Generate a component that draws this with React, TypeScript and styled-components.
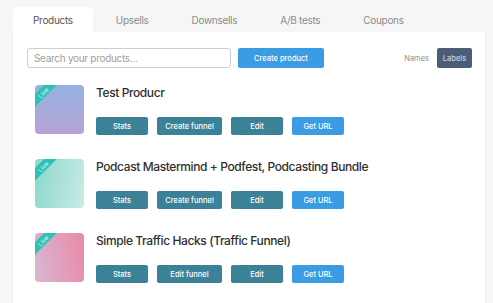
import React from "react";
import styled, { createGlobalStyle } from "styled-components";

const Global = createGlobalStyle`
  html, body { margin: 0; padding: 0; background: #f6f6f6; }
  body { font-family: Inter, "Liberation Sans", Arial, sans-serif; -webkit-font-smoothing: antialiased; }
  * { box-sizing: border-box; }
`;

const Page = styled.div`
  width: 493px;
  height: 303px;
  overflow: hidden;
  padding: 7px 7px 0 12px;
  display: flex;
  flex-direction: column;
`;

const Tabs = styled.div`
  display: flex;
  gap: 3px;
  padding-left: 1px;
  height: 25px;
`;

const Tab = styled.div<{ $active?: boolean }>`
  padding: 0 20px;
  display: flex;
  align-items: center;
  font-size: 10px;
  letter-spacing: -0.3px;
  color: ${(p) => (p.$active ? "#555" : "#8a8a8a")};
  background: ${(p) => (p.$active ? "#fff" : "transparent")};
  border-radius: 3px 3px 0 0;
`;

const Panel = styled.div`
  flex: 1;
  background: #fff;
  border-left: 1px solid #eee;
  border-right: 1px solid #ececec;
  padding: 16px 13px 0 14px;
`;

const Toolbar = styled.div`
  display: flex;
  align-items: center;
  height: 20px;
`;

const Search = styled.input`
  width: 204px;
  height: 20px;
  border: 1px solid #cfcfcf;
  border-radius: 3px;
  padding: 0 6px;
  font-family: inherit;
  font-size: 10px;
  letter-spacing: -0.3px;
  color: #333;
  outline: none;
  &::placeholder { color: #a0a0a0; }
`;

const Button = styled.button<{ $variant: "blue" | "teal" | "slate" }>`
  border: none;
  border-radius: 2px;
  font-family: inherit;
  font-size: 7.5px;
  font-weight: 500;
  color: ${(p) => (p.$variant === "slate" ? "#c9d1dc" : "#fff")};
  background: ${(p) =>
    p.$variant === "blue" ? "#3a9ce2" : p.$variant === "teal" ? "#3b8198" : "#4b5d78"};
  padding: 0;
  cursor: pointer;
`;

const CreateButton = styled(Button)`
  width: 86px;
  height: 20px;
  margin-left: 7px;
`;

const ViewToggle = styled.div`
  margin-left: auto;
  display: flex;
  align-items: center;
  gap: 8px;
`;

const NamesLabel = styled.span`
  font-size: 7.5px;
  color: #8c8c8c;
`;

const LabelsButton = styled(Button)`
  width: 35px;
  height: 20px;
`;

const List = styled.div`
  display: flex;
  flex-direction: column;
  gap: 24px;
  padding: 17px 0 0 8px;
`;

const Row = styled.div`
  display: flex;
  gap: 12px;
`;

const Thumb = styled.div<{ $from: string; $to: string; $angle: number }>`
  position: relative;
  width: 49px;
  height: 49px;
  border-radius: 4px;
  overflow: hidden;
  flex-shrink: 0;
  background: linear-gradient(${(p) => p.$angle}deg, ${(p) => p.$from}, ${(p) => p.$to});
`;

const Ribbon = styled.div`
  position: absolute;
  left: -18px;
  top: 3px;
  width: 52px;
  height: 9px;
  background: #2cc2b7;
  transform: rotate(-45deg);
  display: flex;
  align-items: center;
  justify-content: center;
  font-size: 6px;
  color: #e6fbf8;
  letter-spacing: 0.2px;
`;

const Info = styled.div`
  display: flex;
  flex-direction: column;
  justify-content: space-between;
  height: 50px;
`;

const Title = styled.div`
  font-size: 12px;
  letter-spacing: -0.4px;
  font-weight: 500;
  color: #2f2f2f;
  line-height: 15px;
`;

const Actions = styled.div`
  display: flex;
  gap: 9px;
`;

const ActionButton = styled(Button)<{ $w: number }>`
  width: ${(p) => p.$w}px;
  height: 18px;
`;

type Product = {
  name: string;
  funnel: string;
  from: string;
  to: string;
  angle: number;
};

const products: Product[] = [
  { name: "Test Producr", funnel: "Create funnel", from: "#93b3e2", to: "#b7a3d4", angle: 180 },
  { name: "Podcast Mastermind + Podfest, Podcasting Bundle", funnel: "Create funnel", from: "#8dd7cb", to: "#c7ebe5", angle: 100 },
  { name: "Simple Traffic Hacks (Traffic Funnel)", funnel: "Edit funnel", from: "#d8b7d3", to: "#e98aa6", angle: 80 },
];

export default function App() {
  return (
    <>
      <Global />
      <Page>
        <Tabs>
          <Tab $active>Products</Tab>
          <Tab>Upsells</Tab>
          <Tab>Downsells</Tab>
          <Tab>A/B tests</Tab>
          <Tab>Coupons</Tab>
        </Tabs>
        <Panel>
          <Toolbar>
            <Search placeholder="Search your products..." />
            <CreateButton $variant="blue">Create product</CreateButton>
            <ViewToggle>
              <NamesLabel>Names</NamesLabel>
              <LabelsButton $variant="slate">Labels</LabelsButton>
            </ViewToggle>
          </Toolbar>
          <List>
            {products.map((p) => (
              <Row key={p.name}>
                <Thumb $from={p.from} $to={p.to} $angle={p.angle}>
                  <Ribbon>Live</Ribbon>
                </Thumb>
                <Info>
                  <Title>{p.name}</Title>
                  <Actions>
                    <ActionButton $variant="teal" $w={52}>Stats</ActionButton>
                    <ActionButton $variant="teal" $w={65}>{p.funnel}</ActionButton>
                    <ActionButton $variant="teal" $w={52}>Edit</ActionButton>
                    <ActionButton $variant="blue" $w={52}>Get URL</ActionButton>
                  </Actions>
                </Info>
              </Row>
            ))}
          </List>
        </Panel>
      </Page>
    </>
  );
}
